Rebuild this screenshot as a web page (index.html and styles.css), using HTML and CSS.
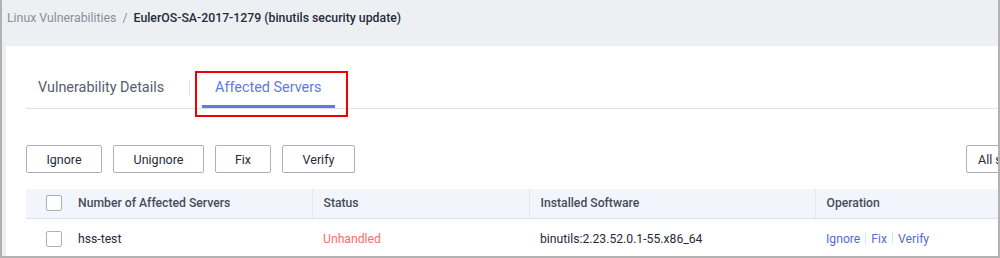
FILE: index.html
```html
<!DOCTYPE html>
<html lang="en">
<head>
    <meta charset="UTF-8">
    <title>Affected Servers</title>
    <link rel="stylesheet" href="styles.css">
</head>
<body>
    <div class="frame">
        <div class="breadcrumb">
            <span class="crumb-link">Linux Vulnerabilities</span>
            <span class="crumb-sep">/</span>
            <span class="crumb-current">EulerOS-SA-2017-1279 (binutils security update)</span>
        </div>
        <div class="card">
            <div class="panel">
                <div class="tabs">
                    <div class="tab">Vulnerability Details</div>
                    <span class="tab-divider"></span>
                    <div class="tab active">
                        Affected Servers
                        <span class="highlight-box"></span>
                    </div>
                </div>

                <div class="toolbar">
                    <button class="btn btn-ignore">Ignore</button>
                    <button class="btn btn-unignore">Unignore</button>
                    <button class="btn btn-fix">Fix</button>
                    <button class="btn btn-verify">Verify</button>
                    <div class="select">All statuses</div>
                </div>

                <table class="grid">
                    <thead>
                        <tr>
                            <th class="col-name">
                                <div class="name-cell"><span class="checkbox"></span>Number of Affected Servers</div>
                            </th>
                            <th class="col-status">Status</th>
                            <th class="col-software">Installed Software</th>
                            <th class="col-op">Operation</th>
                        </tr>
                    </thead>
                    <tbody>
                        <tr>
                            <td>
                                <div class="name-cell"><span class="checkbox"></span>hss-test</div>
                            </td>
                            <td class="status-unhandled">Unhandled</td>
                            <td>binutils:2.23.52.0.1-55.x86_64</td>
                            <td>
                                <a class="op-link">Ignore</a><span class="op-sep"></span><a class="op-link">Fix</a><span class="op-sep"></span><a class="op-link">Verify</a>
                            </td>
                        </tr>
                    </tbody>
                </table>
            </div>
        </div>
    </div>
</body>
</html>
```

FILE: styles.css
```css
/* Page reset */
html, body {
    margin: 0;
    padding: 0;
    height: 100%;
    overflow: hidden;
    font-family: Roboto, 'Noto Sans', sans-serif;
    color: #252b3a;
}
/* Screenshot frame with grey edges */
.frame {
    display: flex;
    flex-direction: column;
    width: 1000px;
    height: 258px;
    box-sizing: border-box;
    border-left: 2px solid #b2b2b2;
    border-right: 2px solid #b2b2b2;
    border-bottom: 2px solid #b2b2b2;
    background-color: #eeeff3;
    overflow: hidden;
}
/* Breadcrumb */
.breadcrumb {
    display: flex;
    align-items: center;
    height: 46px;
    padding: 0 0 11px 5px;
    box-sizing: border-box;
    font-size: 12.3px;
    flex-shrink: 0;
}
.crumb-link {
    color: #8a8e99;
}
.crumb-sep {
    color: #8a8e99;
    margin: 0 6px;
}
.crumb-current {
    color: #252b3a;
    font-weight: 500;
}
/* White content card */
.card {
    flex-grow: 1;
    margin-left: 4px;
    background-color: #ffffff;
    overflow: hidden;
}
.panel {
    width: 1080px;
    margin-left: 20px;
}
/* Tabs */
.tabs {
    display: flex;
    align-items: center;
    height: 39px;
    margin-top: 24px;
    border-bottom: 1px solid #dfe1e6;
    box-sizing: border-box;
}
.tab {
    position: relative;
    display: flex;
    align-items: center;
    height: 100%;
    padding: 0 12px 3px;
    box-sizing: border-box;
    font-size: 14.4px;
    color: #575d6c;
}
.tab.active {
    padding: 0 13px;
    color: #5e7ce0;
    border-bottom: 3px solid #5e7ce0;
}
.tab-divider {
    width: 1px;
    height: 16px;
    margin: 0 12px 3px 13px;
    background-color: #dfe1e6;
}
/* Red annotation frame around the active tab */
.highlight-box {
    position: absolute;
    left: -7px;
    top: 1px;
    width: 153px;
    height: 46px;
    border: 2px solid #f00000;
    box-sizing: border-box;
}
/* Action buttons */
.toolbar {
    display: flex;
    align-items: center;
    margin-top: 36px;
}
.btn {
    height: 28px;
    margin-right: 11px;
    padding: 0;
    border: 1px solid #adb0b8;
    border-radius: 2px;
    background-color: #ffffff;
    color: #252b3a;
    font-family: Roboto, 'Noto Sans', sans-serif;
    font-size: 12.5px;
}
.btn-ignore { width: 76px; }
.btn-unignore { width: 91px; }
.btn-fix { width: 56px; }
.btn-verify { width: 73px; }
.select {
    display: flex;
    align-items: center;
    margin-left: auto;
    width: 140px;
    height: 28px;
    padding-left: 11px;
    box-sizing: border-box;
    border: 1px solid #adb0b8;
    border-radius: 2px;
    font-size: 12.5px;
    white-space: nowrap;
    overflow: hidden;
}
/* Servers table */
.grid {
    width: 1080px;
    margin-top: 16px;
    border-collapse: collapse;
    table-layout: fixed;
    font-size: 12.2px;
}
.grid th,
.grid td {
    box-sizing: border-box;
    padding: 0 0 0 11px;
    text-align: left;
}
.grid th {
    height: 29px;
    background-color: #f2f5fc;
    color: #464c59;
    font-weight: 500;
    border-bottom: 1px solid #dfe1e6;
    border-left: 1px solid #e4e7ee;
}
.grid th:first-child {
    border-left: none;
}
.grid td {
    height: 42px;
}
.col-name { width: 286px; }
.col-status { width: 217px; }
.col-software { width: 286px; }
.col-op { width: 291px; }
.grid th.col-name,
.grid td:first-child {
    padding-left: 20px;
}
.name-cell {
    display: flex;
    align-items: center;
}
.checkbox {
    width: 16px;
    height: 16px;
    margin-right: 16px;
    border: 1px solid #adb0b8;
    border-radius: 2px;
    box-sizing: border-box;
    background-color: #ffffff;
    flex-shrink: 0;
}
.status-unhandled {
    color: #f66f6a;
}
.op-link {
    color: #526ecc;
    cursor: pointer;
}
.op-sep {
    display: inline-block;
    width: 1px;
    height: 12px;
    margin: 0 5px;
    background-color: #dfe1e6;
    vertical-align: -1px;
}
```
